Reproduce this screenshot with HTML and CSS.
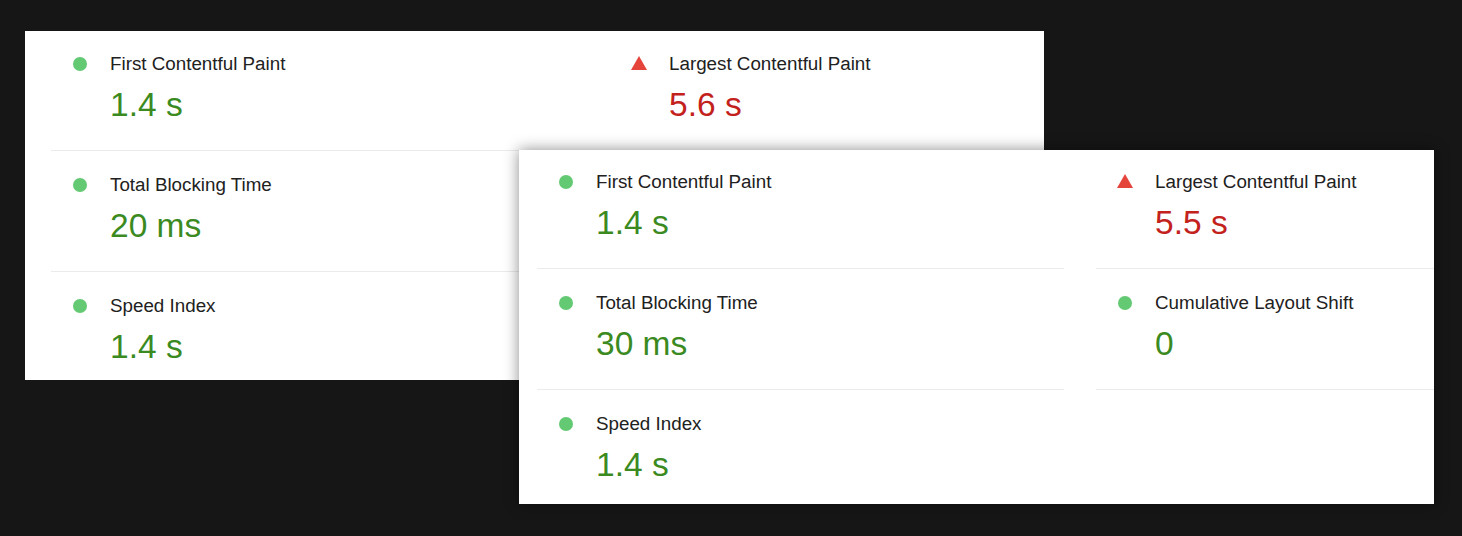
FILE: index.html
```html
<!DOCTYPE html>
<html>
<head>
<meta charset="utf-8">
<link rel="stylesheet" href="styles.css">
</head>
<body>
<div class="canvas">
  <section class="card card-back">
    <div class="grid">
      <div class="metric"><div class="label"><span class="dot"></span>First Contentful Paint</div><div class="value pass">1.4 s</div></div>
      <div class="metric"><div class="label"><span class="tri"></span>Largest Contentful Paint</div><div class="value fail">5.6 s</div></div>
      <div class="metric"><div class="label"><span class="dot"></span>Total Blocking Time</div><div class="value pass">20 ms</div></div>
      <div class="metric metric-empty"></div>
      <div class="metric"><div class="label"><span class="dot"></span>Speed Index</div><div class="value pass">1.4 s</div></div>
    </div>
  </section>
  <section class="card card-front">
    <div class="grid">
      <div class="metric"><div class="label"><span class="dot"></span>First Contentful Paint</div><div class="value pass">1.4 s</div></div>
      <div class="metric"><div class="label"><span class="tri"></span>Largest Contentful Paint</div><div class="value fail">5.5 s</div></div>
      <div class="metric"><div class="label"><span class="dot"></span>Total Blocking Time</div><div class="value pass">30 ms</div></div>
      <div class="metric"><div class="label"><span class="dot"></span>Cumulative Layout Shift</div><div class="value pass">0</div></div>
      <div class="metric last"><div class="label"><span class="dot"></span>Speed Index</div><div class="value pass">1.4 s</div></div>
    </div>
  </section>
</div>
</body>
</html>
```
FILE: styles.css
```css
* { box-sizing: border-box; }
html, body {
  margin: 0;
  padding: 0;
  background: #161616;
  width: 1462px;
  height: 536px;
  overflow: hidden;
  font-family: "Liberation Sans", Arial, sans-serif;
}
.canvas {
  position: relative;
  width: 1462px;
  height: 536px;
  padding: 31px 0 0 25px;
}
.card {
  background: #fff;
  overflow: hidden;
}
.card-back {
  width: 1019px;
  height: 349px;
  padding-left: 26px;
}
.card-front {
  position: absolute;
  left: 519px;
  top: 150px;
  width: 915px;
  height: 354px;
  padding-left: 18px;
  box-shadow: 0 0 14px rgba(0, 0, 0, 0.45);
}
.grid {
  display: grid;
  grid-template-columns: 527px 527px;
  column-gap: 32px;
}
.metric {
  padding: 22px 0 25px 0;
  border-bottom: 1px solid #ebebeb;
}
.metric:nth-child(-n+2) { padding-top: 20px; }
.card-back .metric:nth-child(-n+2) { padding-top: 21px; }
.metric.last { border-bottom: none; }
.label {
  display: flex;
  align-items: center;
  height: 24px;
  font-size: 18.8px;
  color: #212121;
  padding-left: 22px;
}
.dot {
  width: 14px;
  height: 14px;
  border-radius: 50%;
  background: #63c972;
  margin-right: 23px;
  flex: none;
}
.tri {
  width: 0;
  height: 0;
  border-left: 8px solid transparent;
  border-right: 8px solid transparent;
  border-bottom: 14px solid #e5443b;
  margin-left: -1px;
  margin-right: 22px;
  margin-top: -2px;
  flex: none;
}
.value {
  margin-top: 9px;
  height: 40px;
  line-height: 40px;
  font-size: 33.5px;
  padding-left: 59px;
}
.pass { color: #3b8a1f; }
.fail { color: #c3221c; }
```
